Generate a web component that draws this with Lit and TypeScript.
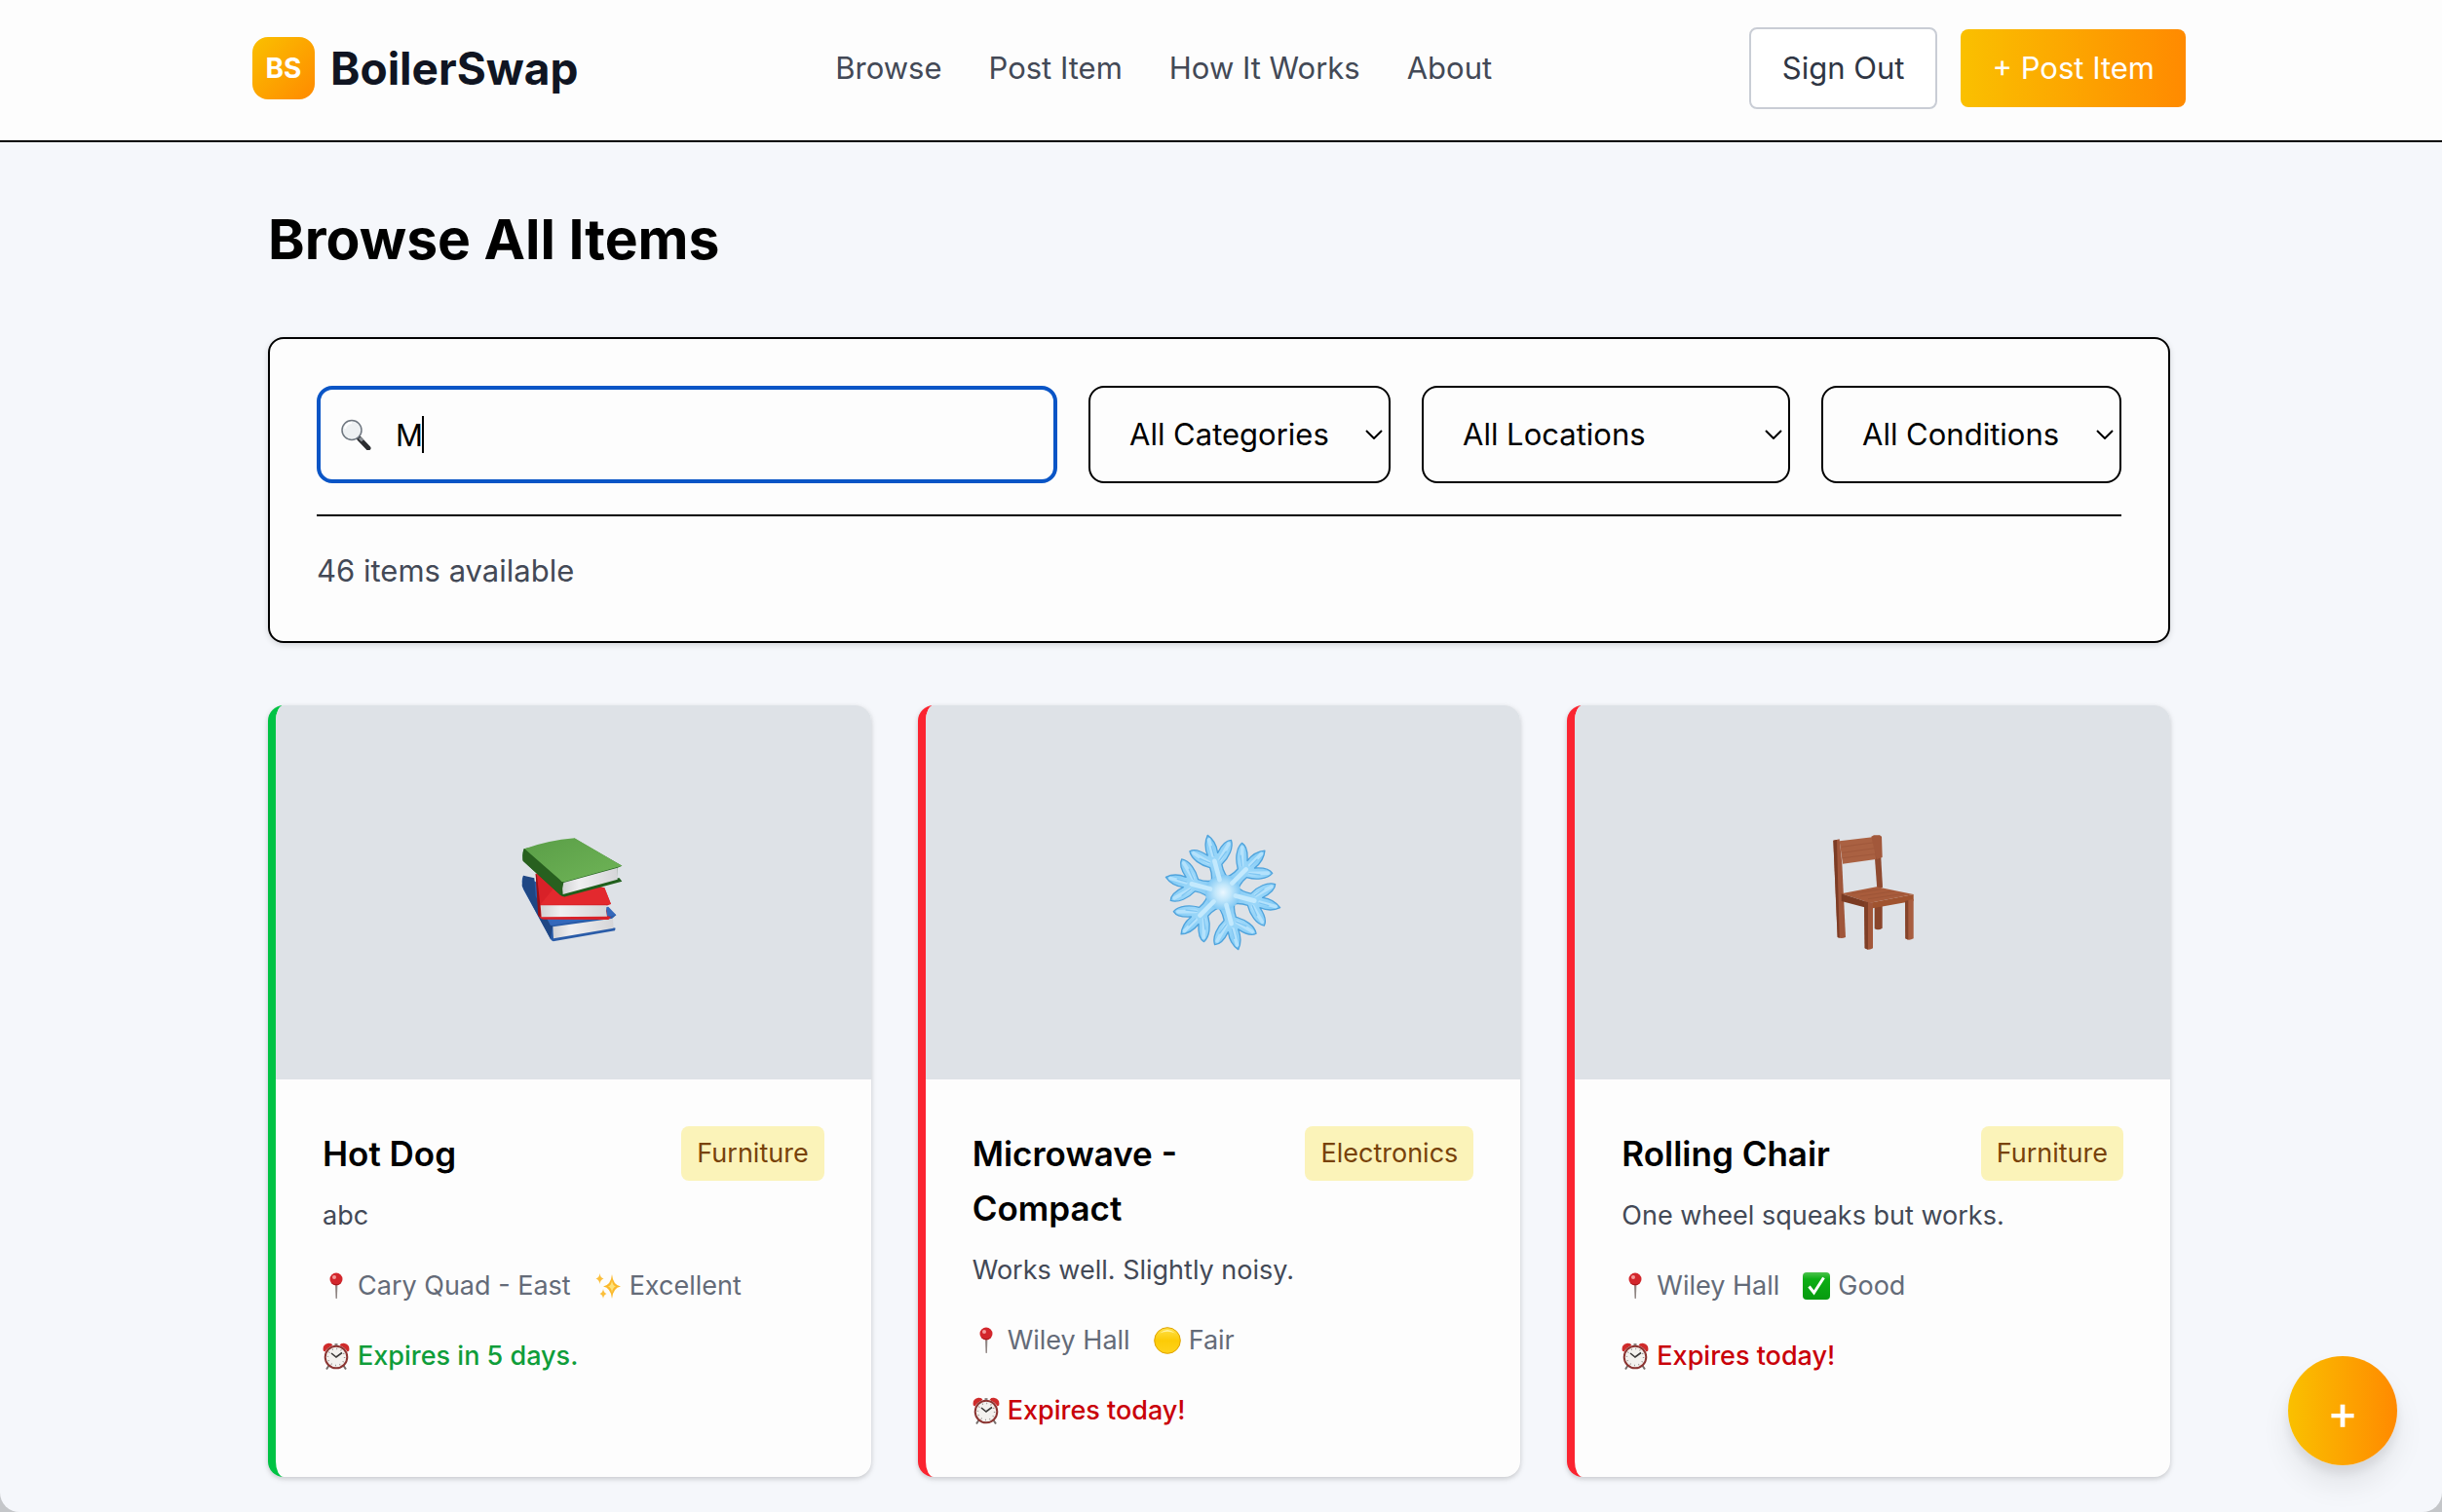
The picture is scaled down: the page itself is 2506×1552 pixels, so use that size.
import { LitElement, html, svg, css } from "lit";
import { customElement, property } from "lit/decorators.js";

type IconName =
  | "books" | "snowflake" | "chair" | "search"
  | "pin" | "sparkles" | "circle" | "check" | "clock" | "chevron";

const snowArm = svg`
  <path d="M-36 -24C-22 -42 -17 -62 -19 -84C-44 -98 -68 -124 -66 -149C-50 -153 -30 -138 -16 -122C-19 -146 -12 -168 0 -182C12 -168 19 -146 16 -122C30 -138 50 -153 66 -149C68 -124 44 -98 19 -84C17 -62 22 -42 36 -24Z"
    fill="url(#ice)" stroke="#4fa3dc" stroke-width="4" stroke-linejoin="round"/>`;
const snowShine = svg`
  <path d="M0 -168V-118M-56 -140L-18 -100M56 -140L18 -100" stroke="#b4e2fc" stroke-width="11" fill="none" stroke-linecap="round"/>
  <path d="M3 -146V-116M-42 -119L-16 -98M42 -119L16 -98" stroke="#5cb4ec" stroke-opacity=".6" stroke-width="4" fill="none" stroke-linecap="round"/>
  <path d="M0 -40V-100" stroke="#c3e9fd" stroke-width="14" fill="none" stroke-linecap="round"/>`;
const armAngles = [-15, 45, 105, 165, 225, 285];

const icons: Record<IconName, { box: string; art: unknown }> = {
  books: {
    box: "85 78 360 360",
    art: svg`
      <defs>
        <linearGradient id="g" x1="0" y1="0" x2="1" y2="1"><stop offset="0" stop-color="#5a9e47"/><stop offset="1" stop-color="#6fb457"/></linearGradient>
        <linearGradient id="pg" x1="0" y1="0" x2="1" y2="0"><stop offset="0" stop-color="#d2d2d4"/><stop offset=".3" stop-color="#efeff1"/><stop offset="1" stop-color="#d5d5d8"/></linearGradient>
      </defs>
      <path d="M112 206Q104 224 112 248L196 402Q200 410 208 408L394 376L396 368L388 366L386 338L398 328L372 306L160 230Z" fill="#2a5ca8"/>
      <path d="M112 206L108 238L196 402L202 362L150 270L146 214Z" fill="#1f4784"/>
      <path d="M196 360L398 328L374 302L180 330Z" fill="#3468bb"/>
      <path d="M203 364L388 338L390 368L205 400Z" fill="url(#pg)"/>
      <path d="M150 200L160 332Q166 342 176 341L374 342L382 334L370 330L366 300L382 294L362 244L200 200Z" fill="#d92128"/>
      <path d="M150 200L158 330L166 334L164 296L154 206Z" fill="#951217"/>
      <path d="M164 296L382 294L362 244L210 240Z" fill="#e3292e"/>
      <path d="M165 298L369 298Q364 315 370 332L168 334Z" fill="url(#pg)"/>
      <path d="M114 124Q106 144 112 162L226 266Q232 272 242 271L416 224L408 214L400 214L402 182L416 176L270 92Z" fill="#1f5f1c"/>
      <path d="M114 124L110 160L228 268L236 224Z" fill="#28601f"/>
      <path d="M236 228L402 182L402 218L234 264Q230 246 236 228Z" fill="url(#pg)"/>
      <path d="M116 124Q186 98 270 91L416 176L238 226Q228 226 224 218Z" fill="url(#g)"/>`,
  },
  snowflake: {
    box: "75 78 360 360",
    art: svg`
      <defs>
        <linearGradient id="ice" x1="0" y1="0" x2="0" y2="1"><stop offset="0" stop-color="#7cc8f5"/><stop offset=".5" stop-color="#9bd7f9"/><stop offset="1" stop-color="#84c9f4"/></linearGradient>
        <radialGradient id="hub"><stop offset="0" stop-color="#eaf7ff"/><stop offset=".45" stop-color="#c2e7fb"/><stop offset="1" stop-color="#83c9f4"/></radialGradient>
      </defs>
      <g transform="translate(255 258)">
        ${armAngles.map((a) => svg`<g transform="rotate(${a})">${snowArm}</g>`)}
        <circle r="54" fill="url(#hub)"/>
        ${armAngles.map((a) => svg`<g transform="rotate(${a})">${snowShine}</g>`)}
      </g>`,
  },
  chair: {
    box: "35 78 360 360",
    art: svg`
      <path d="M220 290H244V368Q232 376 220 370Z" fill="#8a452b"/>
      <path d="M93 98L112 94L120 170L131 396Q118 402 106 396Z" fill="#a0563a"/>
      <path d="M93 98L104 96L112 398L106 396Z" fill="#7c3c25"/>
      <path d="M216 86L236 83L245 242L228 250Z" fill="#8f4a30"/>
      <path d="M112 100L220 87L224 156L122 170Z" fill="#aa6142"/>
      <path d="M118 118L222 104M120 136L222 122M121 152L223 140" stroke="#a0583b" stroke-width="3"/>
      <path d="M210 86L218 82H236L242 86L244 150L226 156Z" fill="#a2583b"/>
      <path d="M118 262L226 241L340 264L206 290Z" fill="#a85c3c"/>
      <path d="M150 262L240 248M176 270L280 254M200 278L310 262" stroke="#9e5537" stroke-width="3"/>
      <path d="M118 262L206 290V308L118 285Z" fill="#7b3b23"/>
      <path d="M206 290L340 264V284L206 308Z" fill="#a0532f"/>
      <path d="M188 286L215 290V430Q202 438 190 430Z" fill="#a2573a"/>
      <path d="M188 286L200 288V434L190 430Z" fill="#7f3f27"/>
      <path d="M314 284L340 278V400Q326 408 315 400Z" fill="#a85d3f"/>
      <path d="M314 284L324 282V404L315 400Z" fill="#85442b"/>`,
  },
  search: {
    box: "0 0 32 32",
    art: svg`
      <path d="M19.500 20L29 30" stroke="#2b2d30" stroke-width="5" stroke-linecap="round"/>
      <path d="M20 19.500L23 22.500" stroke="#8a8f95" stroke-width="3"/>
      <circle cx="12" cy="11.500" r="10" fill="#eef1f3" stroke="#6f7780" stroke-width="1.500"/>
      <path d="M5 10a7.500 7.500 0 0 1 7-6" fill="none" stroke="#fff" stroke-width="2"/>`,
  },
  pin: {
    box: "0 0 28 28",
    art: svg`
      <path d="M13 12h2.400l-.5 14.500q-.7 1-1.400 0z" fill="#8f8583"/>
      <circle cx="14" cy="7" r="6.500" fill="#d3262c"/>
      <path d="M8.500 10a6.500 6.500 0 0 0 11 0 8 8 0 0 1-11 0z" fill="#961519"/>
      <circle cx="12" cy="5" r="2" fill="#f49a9a"/>`,
  },
  sparkles: {
    box: "0 0 28 28",
    art: svg`
      <path d="M18 2Q19 13 27 14.500Q19 16 18 27Q17 16 9 14.500Q17 13 18 2Z" fill="#fbb92c"/>
      <path d="M18 8Q18.500 13.500 22 14.500Q18.500 15.500 18 21Q17.500 15.500 14 14.500Q17.500 13.500 18 8Z" fill="#fde27a"/>
      <path d="M5.500 1Q6 5.500 9.500 6.500Q6 7.500 5.500 12Q5 7.500 1.500 6.500Q5 5.500 5.500 1Z" fill="#fbbf3c"/>
      <path d="M9 17Q9.500 21 12.500 22Q9.500 23 9 27Q8.500 23 5.500 22Q8.500 21 9 17Z" fill="#fbbf3c"/>`,
  },
  circle: {
    box: "0 0 28 28",
    art: svg`
      <defs><linearGradient id="y" x1="0" y1="0" x2="0" y2="1"><stop offset="0" stop-color="#ffe14a"/><stop offset=".5" stop-color="#fccb06"/><stop offset="1" stop-color="#ffd21c"/></linearGradient></defs>
      <circle cx="14" cy="14" r="13.300" fill="url(#y)" stroke="#e0a300" stroke-width="1"/>
      <path d="M6 6.500Q14 -.5 22 6.500Q14 3 6 6.500Z" fill="#fff3a0"/>`,
  },
  check: {
    box: "0 0 28 28",
    art: svg`
      <defs><linearGradient id="c" x1="0" y1="0" x2="0" y2="1"><stop offset="0" stop-color="#4cc24c"/><stop offset=".25" stop-color="#0cae14"/><stop offset="1" stop-color="#079a10"/></linearGradient></defs>
      <rect width="28" height="28" rx="4" fill="url(#c)"/>
      <path d="M6.500 14.500L11.500 21L21.500 5.500" fill="none" stroke="#fff" stroke-width="3"/>`,
  },
  clock: {
    box: "0 0 28 28",
    art: svg`
      <path d="M7 23L4 27.500M21 23L24 27.500" stroke="#77706e" stroke-width="2"/>
      <path d="M14 1V4" stroke="#8e8886" stroke-width="3"/>
      <path d="M.8 8.500Q-.5 2 6 .8Q9.500 .5 10.500 3Q5 5 2.500 9.500ZM27.200 8.500Q28.500 2 22 .8Q18.500 .5 17.500 3Q23 5 25.500 9.500Z" fill="#cf2b2b"/>
      <circle cx="14" cy="15" r="11.300" fill="#f3f1ee" stroke="#8b3532" stroke-width="2"/>
      <circle cx="14" cy="15" r="8.600" fill="none" stroke="#98938f" stroke-width="1.500" stroke-dasharray="1 3.500"/>
      <path d="M9 11L14 15L20 10.500" fill="none" stroke="#3b3938" stroke-width="1.600"/>`,
  },
  chevron: {
    box: "0 0 18 10",
    art: svg`<path d="M1 1L9 9L17 1" fill="none" stroke="#000" stroke-width="2"/>`,
  },
};

@customElement("app-icon")
class AppIcon extends LitElement {
  static styles = css`
    :host { display: inline-flex; flex: none; }
    svg { width: 100%; height: 100%; display: block; }
  `;
  @property() name: IconName = "pin";
  render() {
    const icon = icons[this.name];
    return html`<svg viewBox=${icon.box} aria-hidden="true">${icon.art}</svg>`;
  }
}

interface Item {
  title: string;
  category: string;
  description: string;
  location: string;
  condition: string;
  conditionIcon: IconName;
  picture: IconName;
  expires: string;
  tone: "fresh" | "urgent";
}

@customElement("item-card")
class ItemCard extends LitElement {
  static styles = css`
    :host { display: flex; min-width: 0; }
    .card {
      flex: 1; min-width: 0; overflow: hidden;
      background: #fdfdfd; border-left: 8px solid; border-radius: 16px;
      box-shadow: 0 2px 6px rgba(0, 0, 0, 0.12), 0 2px 4px rgba(0, 0, 0, 0.08);
    }
    .fresh { border-color: #00c344; }
    .urgent { border-color: #fb2430; }
    .picture {
      height: 384px; background: #dee2e7;
      display: flex; align-items: center; justify-content: center;
    }
    .picture app-icon { width: 120px; height: 120px; }
    .body {
      padding: 48px; display: flex; flex-direction: column;
      font-size: 27px; line-height: 40px; color: #434956;
    }
    .top { display: flex; justify-content: space-between; align-items: flex-start; gap: 16px; margin-bottom: 16px; }
    h2 { margin: 0; font-size: 35px; line-height: 56px; font-weight: 600; color: #000; }
    .badge {
      flex: none; padding: 8px 16px; border-radius: 8px;
      background: #fbf3b9; color: #78420a;
    }
    p { margin: 0 0 32px; }
    .meta { display: flex; gap: 24px; margin-bottom: 32px; color: #646b78; }
    .tag { display: flex; align-items: center; gap: 8px; }
    .tag app-icon { width: 28px; height: 28px; }
    .expiry { font-weight: 500; }
    .fresh .expiry { color: #0f9d3a; }
    .urgent .expiry { color: #c90009; }
  `;
  @property({ attribute: false }) item!: Item;
  render() {
    const i = this.item;
    return html`
      <article class="card ${i.tone}">
        <div class="picture"><app-icon .name=${i.picture}></app-icon></div>
        <div class="body">
          <div class="top"><h2>${i.title}</h2><span class="badge">${i.category}</span></div>
          <p>${i.description}</p>
          <div class="meta">
            <span class="tag"><app-icon .name=${"pin"}></app-icon>${i.location}</span>
            <span class="tag"><app-icon .name=${i.conditionIcon}></app-icon>${i.condition}</span>
          </div>
          <div class="tag expiry"><app-icon .name=${"clock"}></app-icon>${i.expires}</div>
        </div>
      </article>`;
  }
}

const items: Item[] = [
  { title: "Hot Dog", category: "Furniture", description: "abc", location: "Cary Quad - East", condition: "Excellent", conditionIcon: "sparkles", picture: "books", expires: "Expires in 5 days.", tone: "fresh" },
  { title: "Microwave - Compact", category: "Electronics", description: "Works well. Slightly noisy.", location: "Wiley Hall", condition: "Fair", conditionIcon: "circle", picture: "snowflake", expires: "Expires today!", tone: "urgent" },
  { title: "Rolling Chair", category: "Furniture", description: "One wheel squeaks but works.", location: "Wiley Hall", condition: "Good", conditionIcon: "check", picture: "chair", expires: "Expires today!", tone: "urgent" },
];

@customElement("app-root")
class AppRoot extends LitElement {
  static styles = css`
    :host {
      display: block; background: #c4c6c9;
      font-family: Inter, "Liberation Sans", sans-serif;
      font-size: 31px; line-height: 48px; color: #000;
    }
    * { box-sizing: border-box; }
    .page { min-height: 100vh; background: #f5f7fb; border-radius: 0 0 20px 20px; }
    header { background: #fdfdfd; border-bottom: 2px solid #000; padding: 28px 36px 32px 32px; }
    .bar { max-width: 1984px; margin: 0 auto; display: flex; align-items: center; justify-content: space-between; }
    a { color: inherit; text-decoration: none; }
    .brand { display: flex; align-items: center; gap: 16px; font-size: 46px; font-weight: 700; color: #101522; }
    .logo {
      width: 64px; height: 64px; border-radius: 16px;
      display: flex; align-items: center; justify-content: center;
      background: linear-gradient(135deg, #fac000, #ff8a00);
      color: #fff; font-size: 28px;
    }
    nav { display: flex; gap: 48px; color: #434956; }
    .actions { display: flex; align-items: center; gap: 24px; }
    button { font: inherit; cursor: pointer; }
    .ghost { padding: 16px 32px; background: #fff; border: 2px solid #c9cdd5; border-radius: 8px; color: #2f3644; }
    .primary { padding: 16px 32px; border: 0; border-radius: 8px; background: linear-gradient(90deg, #fac000, #ff8a00); color: #fff; }
    main { padding: 64px 36px 36px 32px; }
    .content { max-width: 1952px; margin: 0 auto; display: flex; flex-direction: column; gap: 64px; }
    h1 { margin: 0; font-size: 57px; line-height: 72px; font-weight: 700; }
    .filters {
      background: #fdfdfd; border: 2px solid #000; border-radius: 16px; padding: 48px;
      box-shadow: 0 2px 6px rgba(0, 0, 0, 0.14);
    }
    .fields { display: grid; grid-template-columns: minmax(0, 1fr) 310px 378px 308px; gap: 32px; }
    .field { display: grid; align-items: center; }
    .field > * { grid-area: 1 / 1; }
    input, select {
      width: 100%; height: 100px; margin: 0; font: inherit; color: #000;
      background: #fdfdfd; border: 2px solid #000; border-radius: 16px; outline: none;
      appearance: none;
    }
    input { border: 4px solid #0a55c6; padding: 0 32px 0 77px; }
    select { padding: 0 32px 0 40px; }
    .field app-icon { pointer-events: none; }
    .glass { width: 32px; height: 32px; margin-left: 24px; }
    .caret { width: 2px; height: 38px; background: #000; margin-left: 108px; pointer-events: none; }
    .chevron { width: 18px; height: 10px; justify-self: end; margin-right: 8px; }
    .count { margin-top: 32px; padding-top: 32px; border-top: 2px solid #000; color: #434956; }
    .cards { display: grid; grid-template-columns: repeat(3, minmax(0, 1fr)); gap: 48px; }
    .fab {
      position: fixed; right: 46px; bottom: 48px; width: 112px; height: 112px;
      padding: 4px 0 0; border: 0; border-radius: 50%; color: #fff; font-size: 48px; font-weight: 500;
      background: linear-gradient(90deg, #fac000, #ff8a00);
      box-shadow: 0 20px 30px rgba(0, 0, 0, 0.08), 0 8px 12px rgba(0, 0, 0, 0.08);
    }
  `;

  private filter(label: string) {
    return html`<label class="field">
      <select aria-label=${label}><option>${label}</option></select>
      <app-icon class="chevron" .name=${"chevron"}></app-icon>
    </label>`;
  }

  render() {
    return html`
      <div class="page">
        <header>
          <div class="bar">
            <a class="brand" href="#home"><span class="logo">BS</span>BoilerSwap</a>
            <nav>
              <a href="#browse">Browse</a>
              <a href="#post">Post Item</a>
              <a href="#how">How It Works</a>
              <a href="#about">About</a>
            </nav>
            <div class="actions">
              <button class="ghost">Sign Out</button>
              <button class="primary">+ Post Item</button>
            </div>
          </div>
        </header>
        <main>
          <div class="content">
            <h1>Browse All Items</h1>
            <section class="filters">
              <div class="fields">
                <label class="field">
                  <input type="text" aria-label="Search items" .value=${"M"} />
                  <app-icon class="glass" .name=${"search"}></app-icon>
                  <span class="caret"></span>
                </label>
                ${["All Categories", "All Locations", "All Conditions"].map((l) => this.filter(l))}
              </div>
              <div class="count">46 items available</div>
            </section>
            <section class="cards">
              ${items.map((i) => html`<item-card .item=${i}></item-card>`)}
            </section>
          </div>
        </main>
        <button class="fab" aria-label="Post an item">+</button>
      </div>`;
  }
}
